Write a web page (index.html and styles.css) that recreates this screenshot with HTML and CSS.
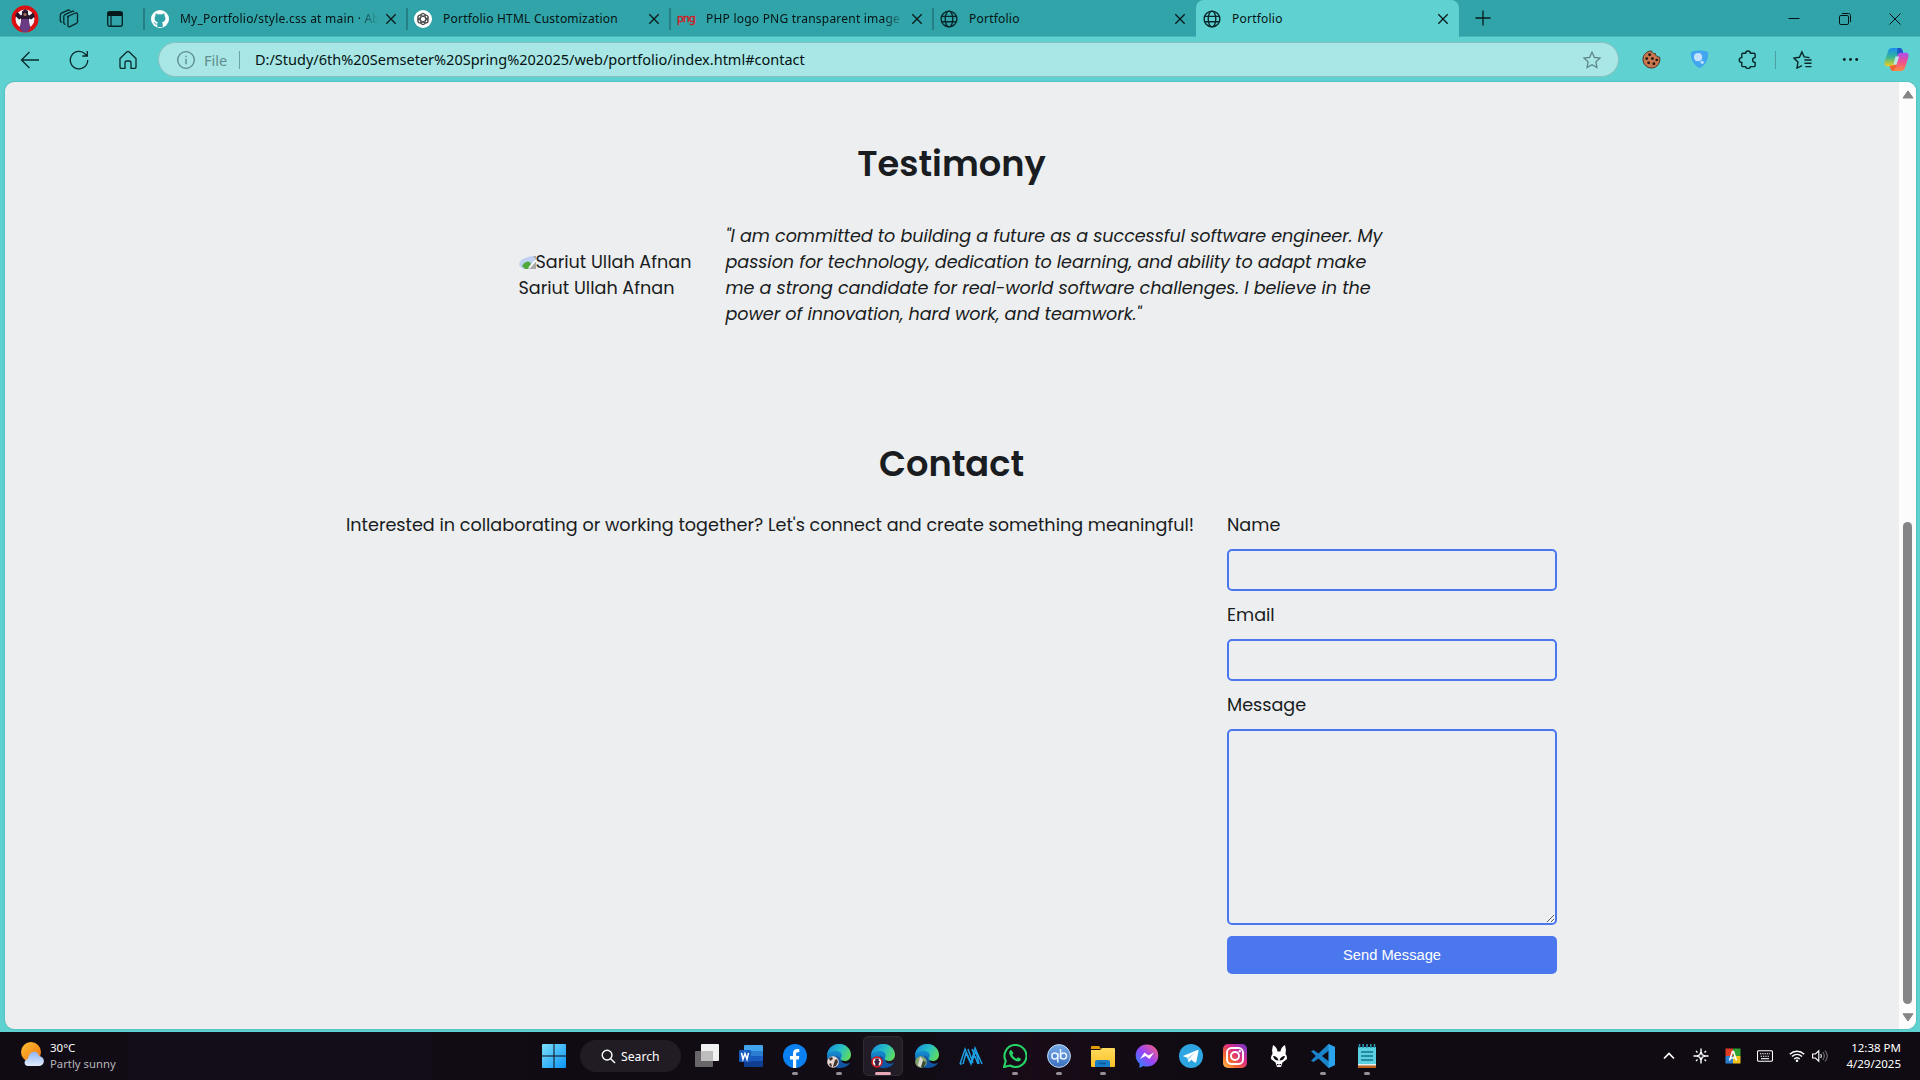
FILE: index.html
```html
<!DOCTYPE html>
<html lang="en">
<head>
<meta charset="utf-8">
<title>Portfolio</title>
<link rel="stylesheet" href="styles.css">
</head>
<body>
<svg class="defs" aria-hidden="true">
  <defs>
    <linearGradient id="edgeBlue" x1="0" y1="0" x2="0" y2="1"><stop offset="0" stop-color="#1ca7e0"/><stop offset="1" stop-color="#0b4fa5"/></linearGradient>
    <linearGradient id="edgeGreen" x1="0" y1="0.3" x2="1" y2="0.7"><stop offset="0" stop-color="#168fdb"/><stop offset=".5" stop-color="#27bfc4"/><stop offset="1" stop-color="#62dc58"/></linearGradient>
    <linearGradient id="winBlue" x1="0" y1="0" x2="1" y2="1"><stop offset="0" stop-color="#7be0fb"/><stop offset="1" stop-color="#0a93f5"/></linearGradient>
    <linearGradient id="sun" x1="0" y1="0" x2="1" y2="1"><stop offset="0" stop-color="#fcc233"/><stop offset="1" stop-color="#f0700f"/></linearGradient>
    <linearGradient id="cloud" x1="0" y1="0" x2="0" y2="1"><stop offset="0" stop-color="#8fb6f5"/><stop offset="1" stop-color="#e2ecfc"/></linearGradient>
    <linearGradient id="insta" x1="0" y1="1" x2="1" y2="0"><stop offset="0" stop-color="#fdc64a"/><stop offset=".3" stop-color="#f7672e"/><stop offset=".6" stop-color="#d92c84"/><stop offset="1" stop-color="#6b3ad4"/></linearGradient>
    <linearGradient id="mess" x1="0" y1="1" x2="1" y2="0"><stop offset="0" stop-color="#1592ff"/><stop offset=".5" stop-color="#9a43f8"/><stop offset="1" stop-color="#ff6470"/></linearGradient>
    <linearGradient id="copA" x1="0" y1="0" x2="0" y2="1"><stop offset="0" stop-color="#1a8df0"/><stop offset=".5" stop-color="#35b795"/><stop offset="1" stop-color="#f2cf1c"/></linearGradient>
    <linearGradient id="copB" x1="0" y1="0" x2="0" y2="1"><stop offset="0" stop-color="#a94ff0"/><stop offset=".5" stop-color="#ee4f93"/><stop offset="1" stop-color="#fb8a3c"/></linearGradient>
    <linearGradient id="folder" x1="0" y1="0" x2="0" y2="1"><stop offset="0" stop-color="#ffdb5c"/><stop offset="1" stop-color="#fcc028"/></linearGradient>
    <linearGradient id="qb" x1="0" y1="0" x2="0" y2="1"><stop offset="0" stop-color="#77a9e6"/><stop offset="1" stop-color="#3a6fbe"/></linearGradient>
    <symbol id="x" viewBox="0 0 12 12"><path d="M1.300 1.300 10.700 10.700M10.700 1.300 1.300 10.700" fill="none" stroke="#0a1a1b" stroke-width="1.300"/></symbol>
    <symbol id="globe" viewBox="0 0 20 20"><g fill="none" stroke="#06272a" stroke-width="1.500"><circle cx="10" cy="10" r="8.800"/><ellipse cx="10" cy="10" rx="4.200" ry="8.800"/><path d="M2 7h16M2 13h16"/></g></symbol>
    <symbol id="edge" viewBox="0 0 24 24"><path d="M0 12C0 5 5.500 0 12 0s10 5 10 9c0 4-3 5.500-6 5.500l-2 2c2 4 6 4.500 9 2.500C21 22 17 24 12 24 5 24 0 19 0 12Z" fill="url(#edgeBlue)"/><path d="M.2 10.500C1.300 4 6.300 0 12 0c7 0 12 5 12 10.500 0 4-2.600 6.500-6 6.500-3 0-4.300-1.300-4.300-2.300s1-1.500 1-3.500C14.700 8.800 12 7 8.800 7 5 7 1.500 8.500.2 10.500Z" fill="url(#edgeGreen)"/><path d="M9 11.500c-2 5.500 2 10.500 8 10.500 2.500 0 4.500-1.300 5.700-3-5 2-9.700-.5-9.700-5Z" fill="#1056a3"/></symbol>
  </defs>
</svg>

<header class="tabstrip">
  <div class="strip-tools">
    <svg width="28" height="28" viewBox="0 0 28 28"><circle cx="14" cy="14" r="11.500" fill="#f4f4f6" stroke="#dc1010" stroke-width="4"/><path d="M11 6.500l3-2.500 3 2v3.500l1.500 1 3.500-3 2 4-4 3-2-1v8l-3 2h-3l-2-2v-8l-2 1-4-4 2.500-3.500 3.500 3.500 1-1Z" fill="#28182e"/><path d="M10.500 14h7l2 9-3 4h-5l-3-4Z" fill="#6a3b83"/><circle cx="14" cy="9.500" r="1.600" fill="#a56f5c"/></svg>
    <svg width="20" height="20" viewBox="0 0 20 20" fill="none" stroke="#07282b" stroke-width="1.300" stroke-linejoin="round"><path d="M8.500 7.500 16.500 4c1-.4 2 .2 2 1.200v7.600c0 .7-.3 1.200-1 1.600l-6.600 3.300c-1 .5-2 0-2-1.200V9c0-.7.1-1.200.9-1.500Z"/><path d="M6.500 15.200c-1 .2-1.700-.3-1.700-1.400V7.500c0-1 .3-1.500 1.200-1.900L13 2.300c.9-.4 1.700-.2 2 .6"/><path d="M3 13c-1 .2-1.700-.3-1.700-1.300V6c0-1 .3-1.500 1.200-1.900L9 1.200c.9-.4 1.700-.2 2 .6"/></svg>
    <svg width="18" height="18" viewBox="0 0 18 18"><rect x="1.700" y="1.700" width="14.600" height="14.600" rx="2" fill="none" stroke="#07282b" stroke-width="1.400"/><path d="M1.500 6V3.500c0-1.100.9-2 2-2h11c1.100 0 2 .9 2 2V6Z" fill="#07181a"/><path d="M5 6v10" stroke="#07282b" stroke-width="1.300"/></svg>
  </div>
  <nav class="tabs">
    <div class="tab">
      <svg class="fav" viewBox="0 0 18 18"><circle cx="9" cy="9" r="9" fill="#fff"/><path d="M6.300 17v-2.500c-2 .4-2.600-.8-3-1.600-.2-.4-.6-.7-.9-1 1.300-.1 1.700 1 2.200 1.500.6.500 1.200.3 1.800.1.100-.7.300-1 .6-1.300C4.800 11.900 3.600 10.700 3.600 8.300c0-1 .3-1.800.9-2.400-.2-.7-.1-1.600.2-2.300.8 0 1.600.4 2.300.9 1.300-.3 2.700-.3 4 0 .7-.5 1.500-.9 2.300-.9.300.7.400 1.600.2 2.300.6.600.9 1.400.9 2.400 0 2.400-1.200 3.600-3.400 3.900.4.400.7 1 .7 1.900V17Z" fill="#2fa3a7"/></svg>
      <span class="title t1">My_Portfolio/style.css at main · Ab</span><svg class="close"><use href="#x"/></svg>
    </div>
    <div class="tab">
      <svg class="fav" viewBox="0 0 18 18"><circle cx="9" cy="9" r="9" fill="#fff"/><g fill="none" stroke="#444" stroke-width=".9"><ellipse cx="9" cy="9" rx="2.600" ry="5.800"/><ellipse cx="9" cy="9" rx="2.600" ry="5.800" transform="rotate(60 9 9)"/><ellipse cx="9" cy="9" rx="2.600" ry="5.800" transform="rotate(120 9 9)"/><circle cx="9" cy="9" r="5.300"/></g></svg>
      <span class="title t2">Portfolio HTML Customization</span><svg class="close"><use href="#x"/></svg>
    </div>
    <div class="tab">
      <span class="fav png">png</span>
      <span class="title t3">PHP logo PNG transparent image</span><svg class="close"><use href="#x"/></svg>
    </div>
    <div class="tab">
      <svg class="fav" viewBox="0 0 20 20"><use href="#globe"/></svg>
      <span class="title">Portfolio</span><svg class="close"><use href="#x"/></svg>
    </div>
    <div class="tab active">
      <svg class="fav" viewBox="0 0 20 20"><use href="#globe"/></svg>
      <span class="title">Portfolio</span><svg class="close"><use href="#x"/></svg>
    </div>
  </nav>
  <svg class="newtab" viewBox="0 0 16 16"><path d="M8 .5v15M.5 8h15" stroke="#0a1a1b" stroke-width="1.300"/></svg>
  <div class="window-buttons">
    <svg viewBox="0 0 12 12"><path d="M.5 5.500h11" stroke="#051314"/></svg>
    <svg viewBox="0 0 12 12"><g fill="none" stroke="#051314"><rect x=".5" y="2.500" width="9" height="9" rx="1.300"/><path d="M3 .5h6.500c1.100 0 2 .9 2 2V9"/></g></svg>
    <svg viewBox="0 0 12 12"><path d="M.5.500l11 11M11.500.5l-11 11" stroke="#051314"/></svg>
  </div>
</header>

<div class="toolbar">
  <div class="nav-buttons">
    <svg viewBox="0 0 20 20"><path d="M19 10H1.500M9.500 2 1.500 10l8 8"/></svg>
    <svg viewBox="0 0 20 20"><path d="M18.700 10A8.700 8.700 0 1 1 16.200 4l2 2M18.300 1v5h-5"/></svg>
    <svg viewBox="0 0 20 20"><path d="M2 8.500 8.800 2c.7-.7 1.700-.7 2.400 0L18 8.500V17c0 .8-.5 1.300-1.300 1.300H13V13c0-1.200-.7-2-1.800-2H8.800C7.700 11 7 11.800 7 13v5.300H3.300c-.8 0-1.300-.5-1.300-1.300Z"/></svg>
  </div>
  <div class="address">
    <svg class="info" viewBox="0 0 18 18"><circle cx="9" cy="9" r="8.300"/><path d="M9 7.800v5.400M9 4.700v1.500"/></svg>
    <span class="scheme">File</span>
    <span class="url">D:/Study/6th%20Semseter%20Spring%202025/web/portfolio/index.html#contact</span>
    <svg class="star" viewBox="0 0 18 18"><path d="M9 1.200 11.400 6.300 17 7l-4.100 3.900 1 5.600L9 13.800l-4.900 2.700 1-5.600L1 7l5.600-.7Z"/></svg>
  </div>
  <div class="extensions">
    <svg viewBox="0 0 20 20"><path d="M10 1c1 3 2.500 3 4 2.500 0 2 1.500 4 4.500 4C20 13 16 19 10 19A9 9 0 0 1 1 10c0-5 4-9 9-9Z" fill="#c9784e" stroke="#4b2c22"/><g fill="#201514"><circle cx="8" cy="5" r="1.500"/><circle cx="5" cy="9" r="1.500"/><circle cx="11" cy="9" r="1.500"/><circle cx="7" cy="13.500" r="1.500"/><circle cx="12.500" cy="14.500" r="1.500"/><circle cx="15.500" cy="10.500" r="1.400"/></g></svg>
    <svg viewBox="0 0 20 20"><path d="M1 2q9-3 18 0c1 8-3 14-9 17C4 16 0 10 1 2Z" fill="#41a5ef"/><circle cx="8.500" cy="7.500" r="4.300" fill="#c4e2fd"/><circle cx="12.800" cy="13" r="1.800" fill="#b9ddfc"/></svg>
    <svg class="line" viewBox="0 0 20 20"><path d="M5 3.500h3c0-3.300 5-3.300 5 0h4c.6 0 1 .4 1 1V8c-3.500 0-3.500 5 0 5v3.500c0 .6-.4 1-1 1h-4c0 2.500-5 2.500-5 0H5c-.6 0-1-.4-1-1V13c-3.600 0-3.600-5 0-5V4.500c0-.6.4-1 1-1Z"/></svg>
    <i class="divider"></i>
    <svg class="line" viewBox="0 0 20 20"><path d="M9.500 16.500 4.200 19l1-6.300L1 8.500l5.800-.8L9.300 2l2.500 5.200 5.700.8M12 10.500h7.500M12 14h7.500M13 17.500h6.500"/></svg>
    <svg viewBox="0 0 20 20"><g fill="#0a2022"><circle cx="3.500" cy="10" r="1.500"/><circle cx="10" cy="10" r="1.500"/><circle cx="16.500" cy="10" r="1.500"/></g></svg>
    <svg class="copilot" viewBox="0 0 24 24"><path d="M8 1h7c1.500 0 2.300 1 2.800 2.500L18.500 6H14l-3.500 11c-.8 1.500-2 1.500-3 1.500H3C.3 18.500 0 16 .8 13.500L4 3.500C4.700 1.700 6 1 8 1Z" fill="url(#copA)"/><path d="M13 1h2c1.500 0 2.300 1 2.800 2.500L18.500 6H14l-1.500 2Z" fill="#1b57c9"/><path d="M16 23H9c-1.500 0-2.300-1-2.800-2.500L5.500 18H9l4.500-11c.8-1.500 2-1.500 3-1.500H21c2.700 0 3 2.500 2.200 5L20 20.500c-.7 1.800-2 2.500-4 2.500Z" fill="url(#copB)"/><path d="M6.200 20.500 5.500 18H9l2-4 1 4-3 5c-1.500 0-2.300-1-2.800-2.500Z" fill="#f5622e"/><path d="M11 9h3.500l-2.500 8H9Z" fill="#b9e8e8"/></svg>
  </div>
</div>

<div class="viewport">
  <main class="page">
    <section class="testimony">
      <h2>Testimony</h2>
      <div class="testimony-row">
        <div class="person">
          <div class="broken"><svg viewBox="0 0 17 13"><path d="M0 8C1 3 8 0 17 0v8l-4 5H5C2 12 0 10 0 8Z" fill="#c0d2f2"/><path d="M3 10c4-6 8-5 9-2l-3 5H6Z" fill="#52a83b"/><path d="M10 13 17 5v8ZM14 0h3v4Z" fill="#aaa"/><path d="M10 12 17 4" stroke="#fff" stroke-width="1.500"/></svg><span class="alt">Sariut Ullah Afnan</span></div>
          <div class="name">Sariut Ullah Afnan</div>
        </div>
        <blockquote>
          <div>"I am committed to building a future as a successful software engineer. My</div>
          <div>passion for technology, dedication to learning, and ability to adapt make</div>
          <div>me a strong candidate for real-world software challenges. I believe in the</div>
          <div>power of innovation, hard work, and teamwork."</div>
        </blockquote>
      </div>
    </section>
    <section class="contact">
      <h2>Contact</h2>
      <div class="contact-row">
        <p class="lead">Interested in collaborating or working together? Let's connect and create something meaningful!</p>
        <form>
          <label for="name">Name</label><input id="name" type="text">
          <label for="email">Email</label><input id="email" type="email">
          <label for="message">Message</label><textarea id="message"></textarea>
          <button type="button">Send Message</button>
        </form>
      </div>
    </section>
  </main>
  <div class="scrollbar">
    <svg viewBox="0 0 12 9"><path d="M6 .8 11 8H1Z" fill="#858587" stroke="#858587" stroke-linejoin="round"/></svg>
    <div class="thumb"></div>
    <svg viewBox="0 0 12 9"><path d="M6 8 1 .8h10Z" fill="#858587" stroke="#858587" stroke-linejoin="round"/></svg>
  </div>
</div>

<footer class="taskbar">
  <div class="weather">
    <svg width="24" height="34" viewBox="0 0 24 34"><circle cx="10" cy="12" r="10" fill="url(#sun)"/><path d="M6 32c-5 0-5-7 0-7.500C7 15 17 14 18 21.500c7 0 7 10.500 0 10.500Z" transform="translate(1.500 -3.500) scale(.92)" fill="url(#cloud)"/></svg>
    <div><div class="temp">30°C</div><div class="sky">Partly sunny</div></div>
  </div>
  <div class="apps">
    <div class="app"><svg viewBox="0 0 24 24"><path d="M0 1q0-1 1-1h10.500v11.500H0ZM12.500 0H23q1 0 1 1v10.500H12.500ZM0 12.500h11.500V24H1q-1 0-1-1ZM12.500 12.500H24V23q0 1-1 1H12.500Z" fill="url(#winBlue)"/></svg></div>
    <div class="search"><svg viewBox="0 0 16 16"><circle cx="6.500" cy="6.500" r="5.200"/><path d="M10.300 10.300 15 15"/></svg><span>Search</span></div>
    <div class="app"><svg viewBox="0 0 24 24"><rect x="0" y="7" width="18" height="16" rx="1" fill="#686668"/><rect x="6" y="0" width="18" height="17" rx="1" fill="#f1f1f1"/><path d="M6 7h12v10H6Z" fill="#bdbdbd"/></svg></div>
    <div class="app"><svg viewBox="0 0 24 24"><path d="M6 1h17q1 0 1 1v5H5V2q0-1 1-1Z" fill="#41a5ee"/><path d="M5 7h19v5H5Z" fill="#2b7cd3"/><path d="M5 12h19v5H5Z" fill="#185abd"/><path d="M5 17h19v5q0 1-1 1H6q-1 0-1-1Z" fill="#103f91"/><rect x="0" y="6" width="12" height="12" rx="1" fill="#185abd"/><path d="m2.500 8.800 1.500 6.500L6 9.500l2 5.800 1.500-6.500" fill="none" stroke="#fff" stroke-width="1.500"/></svg></div>
    <div class="app run"><svg viewBox="0 0 24 24"><circle cx="12" cy="12" r="12" fill="#0b80f0"/><path d="M10 24v-8.500H7V12h3V9.500C10 6.400 11.800 5 14.300 5c1 0 2 .2 2 .2v3h-1.500c-1.200 0-1.600.7-1.600 1.600V12h3.100l-.5 3.500h-2.600V24Z" fill="#fff"/></svg></div>
    <div class="app run"><svg viewBox="0 0 24 24"><use href="#edge"/><circle cx="6" cy="18" r="5.800" fill="#e9d6cf"/><path d="M2 14l3-1 1 2-3 2ZM8 16l2-1 1 3-2 4-3 1 1-4ZM2 20l2-1 1 3-1 1Z" fill="#40342f"/></svg></div>
    <div class="app run current"><svg viewBox="0 0 24 24"><use href="#edge"/><circle cx="6" cy="18" r="4.900" fill="#eee" stroke="#d61920" stroke-width="1.600"/><path d="M4 14.500h4l-.5 2 1.500 1-1 1.500-.5 3h-3L4 19l-1-1.500 1.500-1Z" fill="#3b203e"/></svg></div>
    <div class="app"><svg viewBox="0 0 24 24"><use href="#edge"/><circle cx="6" cy="18" r="5.800" fill="#87a36c"/><path d="M5 12.500l3 3-2 8-3-2Z" fill="#d8dad5"/><path d="M8 17l3 1-2 5H6Z" fill="#394a32"/></svg></div>
    <div class="app"><svg viewBox="0 0 24 24" fill="none" stroke="#1d9de2" stroke-width="1.500"><path d="M1 20 6 5l6 14L16 4l7 16M4 20 7 9l5 11 5-13 3 13M1 20h2M9 5l5 14M13 5l6 15"/></svg></div>
    <div class="app run"><svg viewBox="0 0 24 24"><path d="M1 23 2.700 17A11 11 0 1 1 7 21.500Z" fill="none" stroke="#25d366" stroke-width="2.100"/><path d="M8.500 6.200c-.8-.5-2.300.7-2.300 2.600 0 3.500 5 8.700 8.800 8.700 2 0 3.300-1.600 3-2.800l-3-1.500-1.500 1.500c-2-.8-3.300-2-4.200-3.900l1.200-1.500Z" fill="#25d366"/></svg></div>
    <div class="app run"><svg viewBox="0 0 24 24"><circle cx="12" cy="12" r="11.400" fill="url(#qb)" stroke="#c5daf4"/><g fill="none" stroke="#e8f2ff" stroke-width="1.500"><circle cx="7.800" cy="12" r="3"/><path d="M10.800 9v9.500M13.500 5v10"/><circle cx="16.500" cy="12" r="3"/></g></svg></div>
    <div class="app run"><svg viewBox="0 0 24 24"><path d="M0 3q0-1 1-1h7l2 3H0Z" fill="#e29a08"/><path d="M0 6h9l2-2h12q1 0 1 1v17q0 1-1 1H1q-1 0-1-1Z" fill="url(#folder)"/><path d="M4 23v-5q0-2 2-2h11q2 0 2 2v5Z" fill="#177dc8"/><path d="M8 19.500h7" stroke="#0d5596" stroke-width="1.500"/></svg></div>
    <div class="app"><svg viewBox="0 0 24 24"><path d="M12 .5C5.500.5.700 5.200.700 11.500c0 3.400 1.500 6.200 3.800 8.100V24l3.800-2c1.200.4 2.400.5 3.700.5 6.500 0 11.300-4.700 11.300-11S18.500.5 12 .5Z" fill="url(#mess)"/><path d="m5 15 4.500-6.500 4 3L19 8.500 14.500 15l-4-3Z" fill="#fff"/></svg></div>
    <div class="app"><svg viewBox="0 0 24 24"><circle cx="12" cy="12" r="12" fill="#2ca5e0"/><path d="m4.500 11.800 14-5.800c.8-.3 1.200.2 1 1L17.300 17.800c-.2.900-.8 1-1.500.6l-3.500-2.600-2 2c-.5.500-.9.300-1-.3l-.9-3.800-3.700-1.100c-.7-.2-.8-.6-.2-.8Z" fill="#fff"/><path d="m9 13.500 7-5-5.500 6-.5 3Z" fill="#a6d6ef"/></svg></div>
    <div class="app"><svg viewBox="0 0 24 24"><rect width="24" height="24" rx="5" fill="url(#insta)"/><g fill="none" stroke="#fff" stroke-width="1.900"><rect x="4" y="4" width="16" height="16" rx="4.500"/><circle cx="12" cy="12" r="4"/></g><circle cx="16.700" cy="7.300" r="1.200" fill="#fff"/></svg></div>
    <div class="app"><svg viewBox="0 0 24 24"><path d="M6 1q4 2 4.500 6.500h3Q14 3 18 1q1.500 5 .5 9 2 2 1.500 5l-4.500 3.500L14 23h-4l-1.500-4.500L4 15q-.5-3 1.500-5Q4.500 6 6 1Z" fill="#fff"/><path d="M6 12q4.500 0 5.500 4.500-4.500 0-5.500-4.500ZM18 12q-4.500 0-5.500 4.500 4.500 0 5.500-4.500ZM10 20h1.500v1.200H10ZM12.500 20H14v1.200h-1.500Z" fill="#0d0910"/></svg></div>
    <div class="app run"><svg viewBox="0 0 24 24"><path d="m17.500 0 6.500 3v18l-6.500 3L7.500 14.500 2.500 18 0 16.700 4.800 12 0 7.300 2.500 6l5 3.500ZM18 6.500 11 12l7 5.500Z" fill="#1a83ca"/><path d="m17.500 0 6.500 3v18l-6.500 3Z" fill="#2aa2ed"/></svg></div>
    <div class="app run"><svg viewBox="0 0 24 24"><path d="M3 3h18v18H3Z" fill="#5bd0e3"/><path d="M3 20h18v4H3Z" fill="#b8621a"/><path d="M3 20h18v1.500H3Z" fill="#e8edf0"/><path d="M4.500 0v4M8.200 0v4M12 0v4M15.800 0v4M19.500 0v4" stroke="#2793ad" stroke-width="1.600"/><path d="M6 8h12M6 12h12M6 16h12" stroke="#137187" stroke-width="1.300"/></svg></div>
  </div>
  <div class="tray">
    <svg viewBox="0 0 16 16"><path d="m3 10.500 5-5 5 5" stroke-width="1.700"/></svg>
    <svg viewBox="0 0 16 16"><path d="m8 3.500 1.200 3.300L12.500 8 9.200 9.200 8 12.500 6.800 9.200 3.500 8l3.300-1.200ZM8 .5V3M8 13v2.500M.5 8H3M13 8h2.500M3 3l1.500 1.500M13 3l-1.500 1.500M3 13l1.500-1.500M13 13l-1.500-1.500" stroke-width="1.400"/></svg>
    <svg viewBox="0 0 16 16"><g stroke="none"><path d="M.5.500H8V8H.5Z" fill="#e03b24"/><path d="M8 .5h7.500V8H8Z" fill="#2fa12f"/><path d="M.5 8H8v7.500H.5Z" fill="#2d7fd0"/><path d="M8 8h7.500v7.500H8Z" fill="#f2c21c"/></g><path d="M4.500 12.500 7.500 3.500h1l3 9M5.500 10h5" stroke="#fff" stroke-width="1.600"/></svg>
    <svg viewBox="0 0 16 16"><rect x=".5" y="2.700" width="15" height="10.500" rx="1.300"/><path d="M3 5.800h10M3.700 8.200h9" stroke-dasharray="1.300 1"/><path d="M4 10.700h8"/></svg>
    <svg viewBox="0 0 16 16"><path d="M.8 6.200c4.200-4 10.200-4 14.400 0M3 8.600c3-2.900 7-2.900 10 0M5.200 11c1.800-1.700 3.800-1.700 5.600 0" stroke-width="1.400"/><circle cx="8" cy="12.800" r="1.300" fill="#fff" stroke="none"/></svg>
    <svg class="speaker" viewBox="0 0 16 16"><path d="M.6 6h2.800l3.400-3.200v10.400L3.400 10H.6Z"/><path d="M8.700 6q1.400 2 0 4"/><path d="M10.800 4.200q3 3.800 0 7.600M13 2.500q4.500 5.500 0 11" opacity=".4"/></svg>
    <div class="clock"><div>12:38 PM</div><div class="date">4/29/2025</div></div>
  </div>
</footer>
</body>
</html>
```

FILE: styles.css
```css
* { box-sizing: border-box; }
html, body { margin: 0; height: 100%; overflow: hidden; }
body {
  display: flex; flex-direction: column;
  width: 1920px; height: 1080px;
  background: #60d1d1;
  font-family: "Noto Sans", "Open Sans", sans-serif;
  color: #051314;
}
svg { display: block; flex: none; }
.defs { position: absolute; width: 0; height: 0; }

/* Tab strip */
.tabstrip { display: flex; align-items: center; height: 37px; flex: none; background: #30a4a8; border-bottom: 1px solid #43b6b9; }
.strip-tools { display: flex; align-items: center; width: 144px; padding: 2px 0 0 10.5px; }
.strip-tools svg:nth-child(2) { margin-left: 20px; }
.strip-tools svg:nth-child(3) { margin-left: 27.5px; }
.tabs { display: flex; height: 37px; }
.tab { display: flex; align-items: center; width: 263px; padding: 2px 0 0 7px; position: relative; }
.tab::before { content: ""; position: absolute; left: -1px; top: 8px; width: 2px; height: 22px; background: #267f84; }
.tab .fav { width: 18px; height: 18px; margin-right: 11px; flex: none; }
.tab .title { width: 201px; overflow: hidden; white-space: nowrap; font-size: 12px; line-height: 20px; letter-spacing: 0.22px; }
.tab .close { width: 12px; height: 12px; margin-left: 4px; }
.tab .png { color: #d31921; font-size: 11px; line-height: 16px; letter-spacing: -0.8px; -webkit-text-stroke: .4px #d31921; }
.tab .t1, .tab .t3 { -webkit-mask-image: linear-gradient(90deg, #000 178px, transparent 198px); mask-image: linear-gradient(90deg, #000 178px, transparent 198px); }
.tab.active { background: #60d1d1; border-radius: 8px 8px 0 0; }
.tab.active::before { display: none; }
.newtab { width: 16px; height: 16px; margin-left: 16px; }
.window-buttons { display: flex; gap: 38.5px; margin-left: auto; padding: 1px 19px 0 0; }
.window-buttons svg { width: 12px; height: 12px; }

/* Toolbar */
.toolbar { display: flex; align-items: center; height: 45px; flex: none; }
.nav-buttons { display: flex; gap: 29px; width: 158px; padding-left: 20px; }
.nav-buttons svg { width: 20px; height: 20px; fill: none; stroke: #08292b; stroke-width: 1.3; }
.address { display: flex; align-items: center; width: 1461px; height: 35px; border: 1px solid #8cbfbf; border-radius: 18px; background: #a8e7e5; padding: 0 17px 0 18px; }
.address svg { width: 18px; height: 18px; fill: none; stroke: #5a8687; stroke-width: 1.3; }
.scheme { width: 36px; margin-left: 9px; color: #628c8c; font-size: 14.5px; border-right: 1px solid #6ba3a4; line-height: 18px; }
.url { margin-left: 15px; padding-bottom: 2px; font-size: 14.5px; white-space: nowrap; }
.address .star { margin-left: auto; }
.extensions { display: flex; align-items: center; padding-left: 23px; }
.extensions svg { width: 19px; height: 19px; margin-right: 29px; }
.extensions .line { fill: none; stroke: #08292b; stroke-width: 1.5; margin-right: 17.5px; }
.divider { width: 1px; height: 18px; background: #4c9ea0; margin-right: 17px; }
.extensions .divider + .line { margin-right: 29.5px; }
.extensions .copilot { width: 25px; height: 25px; margin: 0 0 0 -5px; }

/* Web page */
.viewport { display: flex; flex: none; width: 1911px; height: 947px; margin: 0 4px 3px 5px; border-radius: 9px; overflow: hidden; background: #edeef0; box-shadow: 0 0 2px #3a9fa0; }
.page { width: 1894px; padding-top: 55px; font-family: Poppins, Inter, sans-serif; font-size: 17.6px; line-height: 26px; color: #191c20; }
h2 { margin: 0 0 0 -1px; font-size: 35.2px; font-weight: 600; line-height: 54px; text-align: center; }
.testimony-row { display: flex; align-items: center; gap: 32px; width: 870px; margin: 32px 0 0 513.5px; white-space: nowrap; }
.person { width: 175px; }
.broken { display: flex; align-items: center; overflow: hidden; }
.broken svg { width: 17px; height: 13px; }
blockquote { margin: 0; font-style: italic; letter-spacing: -0.07px; }
.contact { margin-top: 110px; }
.contact-row { display: flex; gap: 31px; width: 1211px; margin: 21px 0 0 341px; }
.lead { width: 850px; margin: 0; white-space: nowrap; }
form { display: flex; flex-direction: column; gap: 11px; width: 330px; }
input, textarea { width: 330px; border: 2px solid #4b77ee; border-radius: 5px; background: transparent; height: 42px; padding: 10px; margin: 0; }
textarea { height: 196px; resize: both; }
button { height: 38px; border: 0; border-radius: 5px; background: #4b77ee; color: #fff; font: 14.7px "Liberation Sans", Arial, sans-serif; }

.scrollbar { display: flex; flex-direction: column; align-items: center; width: 17px; background: #fcfcfc; padding: 8px 0 7px; }
.scrollbar svg { width: 12px; height: 9px; }
.thumb { width: 9px; height: 482px; margin: auto 0 9px; border-radius: 5px; background: #858587; }

/* Taskbar */
.taskbar { display: flex; align-items: center; height: 48px; flex: none; color: #fff; background: linear-gradient(90deg, #100b13, #130d18 14%, #100b13 30%, #120c16 50%, #180b17 54%, #100b13 62%); font-size: 12px; line-height: 16px; }
.weather { display: flex; width: 532px; padding: 1px 0 0 21px; gap: 5px; }
.weather .temp { font-size: 11.5px; }
.weather .sky { color: #b7b4b9; font-size: 11.3px; }
.apps { display: flex; height: 48px; align-items: center; }
.app { display: flex; align-items: center; justify-content: center; width: 44px; height: 48px; position: relative; }
.app > svg { width: 24px; height: 24px; }
.run::after { content: ""; position: absolute; left: 19px; bottom: 5px; width: 6px; height: 3px; border-radius: 2px; background: #969096; }
.current::before { content: ""; position: absolute; inset: 4px 2px; border: 1px solid #302a33; border-radius: 5px; background: #221c26; }
.current > svg { position: relative; }
.current::after { left: 14px; width: 16px; background: #e5a9b7; }
.search { display: flex; align-items: center; gap: 5px; width: 101px; height: 32px; margin: 0 4px; padding-left: 21px; border-radius: 16px; background: #211c24; font-size: 12.2px; }
.search span { padding-top: 2px; }
.search svg { width: 15px; height: 15px; fill: none; stroke: #fff; stroke-width: 1.5; }
.tray { display: flex; align-items: center; gap: 16px; margin-left: auto; padding-right: 19px; }
.tray svg { width: 16px; height: 16px; fill: none; stroke: #fff; stroke-width: 1.1; }
.tray .speaker { margin-left: -9px; }
.clock { width: 57px; text-align: right; font-size: 11.5px; white-space: nowrap; display: flex; flex-direction: column; align-items: flex-end; }
```
